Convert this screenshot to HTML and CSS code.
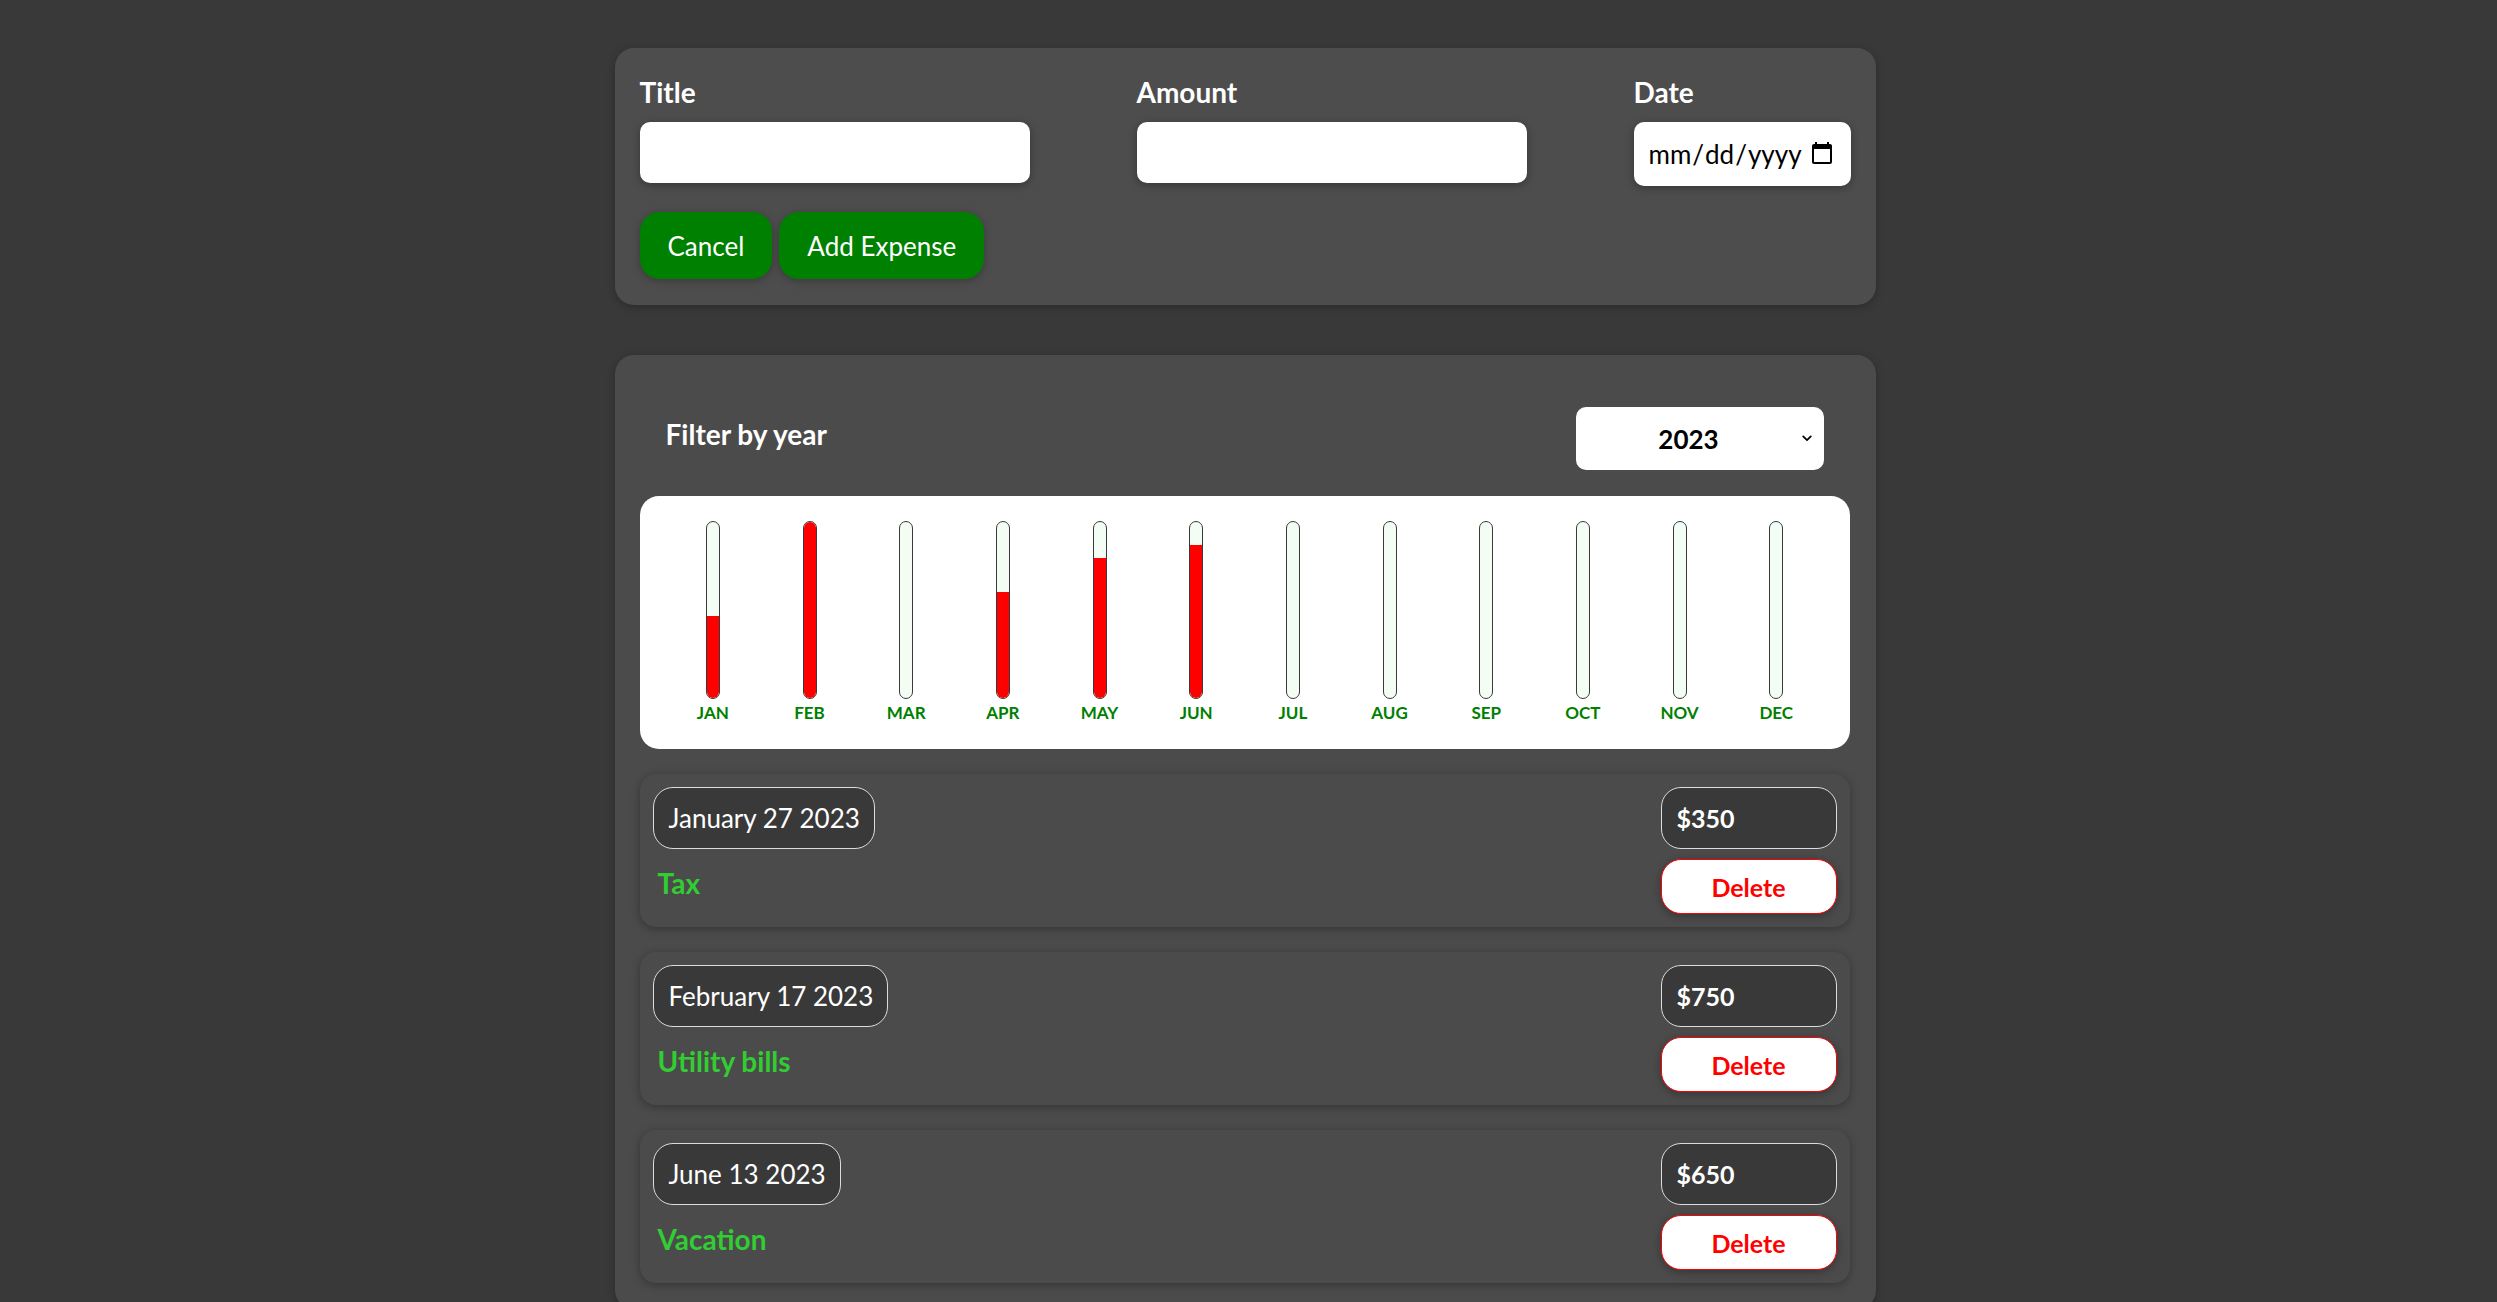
FILE: index.html
```html
<!DOCTYPE html>
<html lang="en">
<head>
<meta charset="utf-8">
<title>Expenses</title>
<link rel="stylesheet" href="styles.css">
</head>
<body>
<div class="app">
  <form class="new-expense">
    <div class="controls">
      <div class="control control-wide">
        <label class="control-label">Title</label>
        <input class="text-input" type="text">
      </div>
      <div class="control control-wide">
        <label class="control-label">Amount</label>
        <input class="text-input" type="number">
      </div>
      <div class="control">
        <label class="control-label">Date</label>
        <input class="date-input" type="date">
      </div>
    </div>
    <div class="actions">
      <button type="button" class="btn-green">Cancel</button>
      <button type="button" class="btn-green">Add Expense</button>
    </div>
  </form>

  <section class="expenses">
    <div class="filter">
      <span class="filter-label">Filter by year</span>
      <div class="select-wrap">
        <select class="filter-select">
          <option>2023</option>
          <option>2022</option>
          <option>2021</option>
        </select>
        <svg class="select-chevron" width="10" height="7" viewBox="0 0 10 7" aria-hidden="true">
          <path d="M1.2 1.3 L5 5.2 L8.8 1.3" fill="none" stroke="#000" stroke-width="1.7" stroke-linecap="round" stroke-linejoin="round"/>
        </svg>
      </div>
    </div>

    <div class="chart">
      <div class="chart-col"><div class="bar"><div class="bar-fill" style="height:46.7%"></div></div><span class="bar-label">JAN</span></div>
      <div class="chart-col"><div class="bar"><div class="bar-fill" style="height:100%"></div></div><span class="bar-label">FEB</span></div>
      <div class="chart-col"><div class="bar"><div class="bar-fill" style="height:0%"></div></div><span class="bar-label">MAR</span></div>
      <div class="chart-col"><div class="bar"><div class="bar-fill" style="height:60%"></div></div><span class="bar-label">APR</span></div>
      <div class="chart-col"><div class="bar"><div class="bar-fill" style="height:79.5%"></div></div><span class="bar-label">MAY</span></div>
      <div class="chart-col"><div class="bar"><div class="bar-fill" style="height:86.7%"></div></div><span class="bar-label">JUN</span></div>
      <div class="chart-col"><div class="bar"><div class="bar-fill" style="height:0%"></div></div><span class="bar-label">JUL</span></div>
      <div class="chart-col"><div class="bar"><div class="bar-fill" style="height:0%"></div></div><span class="bar-label">AUG</span></div>
      <div class="chart-col"><div class="bar"><div class="bar-fill" style="height:0%"></div></div><span class="bar-label">SEP</span></div>
      <div class="chart-col"><div class="bar"><div class="bar-fill" style="height:0%"></div></div><span class="bar-label">OCT</span></div>
      <div class="chart-col"><div class="bar"><div class="bar-fill" style="height:0%"></div></div><span class="bar-label">NOV</span></div>
      <div class="chart-col"><div class="bar"><div class="bar-fill" style="height:0%"></div></div><span class="bar-label">DEC</span></div>
    </div>

    <ul class="expense-list">
      <li class="expense-item">
        <div class="expense-main">
          <div class="expense-date">January 27 2023</div>
          <h2 class="expense-title">Tax</h2>
        </div>
        <div class="expense-side">
          <div class="expense-amount">$350</div>
          <button type="button" class="btn-delete">Delete</button>
        </div>
      </li>
      <li class="expense-item">
        <div class="expense-main">
          <div class="expense-date">February 17 2023</div>
          <h2 class="expense-title">Utility bills</h2>
        </div>
        <div class="expense-side">
          <div class="expense-amount">$750</div>
          <button type="button" class="btn-delete">Delete</button>
        </div>
      </li>
      <li class="expense-item">
        <div class="expense-main">
          <div class="expense-date">June 13 2023</div>
          <h2 class="expense-title">Vacation</h2>
        </div>
        <div class="expense-side">
          <div class="expense-amount">$650</div>
          <button type="button" class="btn-delete">Delete</button>
        </div>
      </li>
    </ul>
  </section>
</div>
</body>
</html>
```

FILE: styles.css
```css
* {
  box-sizing: border-box;
}

html, body {
  margin: 0;
  padding: 0;
}

body {
  background: #393939;
  font-family: Lato, "Open Sans", "Liberation Sans", sans-serif;
  color: #ffffff;
  padding-right: 7px;
}

.app {
  width: 1261px;
  margin: 48px auto 0;
}

/* ---------- form card ---------- */
.new-expense {
  background: #4d4d4d;
  border-radius: 19px;
  padding: 27px 25px 26px;
  box-shadow: 0 2px 8px rgba(0, 0, 0, 0.25);
}

.controls {
  display: flex;
  justify-content: space-between;
  align-items: flex-start;
}

.control {
  display: flex;
  flex-direction: column;
}

.control-wide {
  width: 390px;
}

.control-label {
  font-size: 28px;
  font-weight: 700;
  line-height: 34px;
  margin-bottom: 13px;
}

.text-input {
  height: 61px;
  width: 100%;
  border: none;
  border-radius: 10px;
  background: #ffffff;
  box-shadow: 0 2px 8px rgba(0, 0, 0, 0.3);
  font-family: inherit;
  font-size: 26px;
  padding: 0 14px;
}

.date-input {
  height: 64px;
  width: 217px;
  border: none;
  border-radius: 10px;
  background: #ffffff;
  box-shadow: 0 2px 8px rgba(0, 0, 0, 0.3);
  font-family: inherit;
  font-size: 26px;
  padding: 0 14px 0 14px;
  color: #000;
}

.actions {
  display: flex;
  gap: 7px;
  margin-top: 26px;
}

.btn-green {
  height: 67px;
  padding: 0 28px;
  border: none;
  border-radius: 20px;
  background: #008000;
  color: #ffffff;
  font-family: inherit;
  font-size: 26px;
  box-shadow: 0 2px 8px rgba(0, 0, 0, 0.26);
}

/* ---------- expenses card ---------- */
.expenses {
  margin-top: 50px;
  background: #4b4b4b;
  border-radius: 19px;
  padding: 26px 26px 26px 25px;
  box-shadow: 0 2px 8px rgba(0, 0, 0, 0.25);
}

.filter {
  display: flex;
  align-items: center;
  justify-content: space-between;
  padding: 26px 26px;
}

.filter-label {
  font-size: 28px;
  font-weight: 700;
  padding-bottom: 10px;
}

.select-wrap {
  position: relative;
  width: 248px;
  height: 63px;
}

.filter-select {
  appearance: none;
  -webkit-appearance: none;
  width: 100%;
  height: 100%;
  border: none;
  border-radius: 10px;
  background: #ffffff;
  color: #000;
  font-family: inherit;
  font-size: 26px;
  font-weight: 700;
  text-align: center;
  text-align-last: center;
  padding: 0 32px 0 10px;
}

.select-chevron {
  position: absolute;
  right: 12px;
  top: 28px;
  pointer-events: none;
}

.chart {
  display: flex;
  background: #ffffff;
  border-radius: 19px;
  padding: 25px;
}

.chart-col {
  flex: 1;
  display: flex;
  flex-direction: column;
  align-items: center;
}

.bar {
  width: 14px;
  height: 178px;
  border: 1px solid #3a3a3a;
  border-radius: 12px;
  background: #f3fdf3;
  overflow: hidden;
  display: flex;
  flex-direction: column;
  justify-content: flex-end;
}

.bar-fill {
  width: 100%;
  background: #ff0000;
}

.bar-label {
  color: #008000;
  font-size: 17px;
  font-weight: 700;
  line-height: 22px;
  margin-top: 3px;
}

.expense-list {
  list-style: none;
  margin: 25px 0 0;
  padding: 0;
  display: flex;
  flex-direction: column;
  gap: 25px;
}

.expense-item {
  display: flex;
  justify-content: space-between;
  align-items: flex-start;
  background: #4b4b4b;
  border-radius: 16px;
  padding: 13px;
  box-shadow: 0 2px 10px rgba(0, 0, 0, 0.3);
}

.expense-main {
  display: flex;
  flex-direction: column;
  align-items: flex-start;
}

.expense-date {
  height: 62px;
  display: flex;
  align-items: center;
  padding: 0 14px 0 15px;
  border: 1px solid #dcdcdc;
  border-radius: 20px;
  background: #393939;
  font-size: 26px;
  color: #ffffff;
}

.expense-title {
  margin: 17px 0 0 5px;
  font-size: 28px;
  line-height: 34px;
  font-weight: 700;
  color: #32cd32;
}

.expense-side {
  display: flex;
  flex-direction: column;
  gap: 10px;
  width: 176px;
}

.expense-amount {
  height: 62px;
  display: flex;
  align-items: center;
  padding: 0 15px;
  border: 1px solid #dcdcdc;
  border-radius: 20px;
  background: #393939;
  font-size: 25px;
  font-weight: 700;
  color: #ffffff;
}

.btn-delete {
  height: 55px;
  width: 100%;
  border: 1px solid #ff0000;
  border-radius: 20px;
  background: #ffffff;
  color: #ff0000;
  font-family: inherit;
  font-size: 25px;
  font-weight: 700;
  box-shadow: 0 2px 8px rgba(0, 0, 0, 0.3);
}
```
